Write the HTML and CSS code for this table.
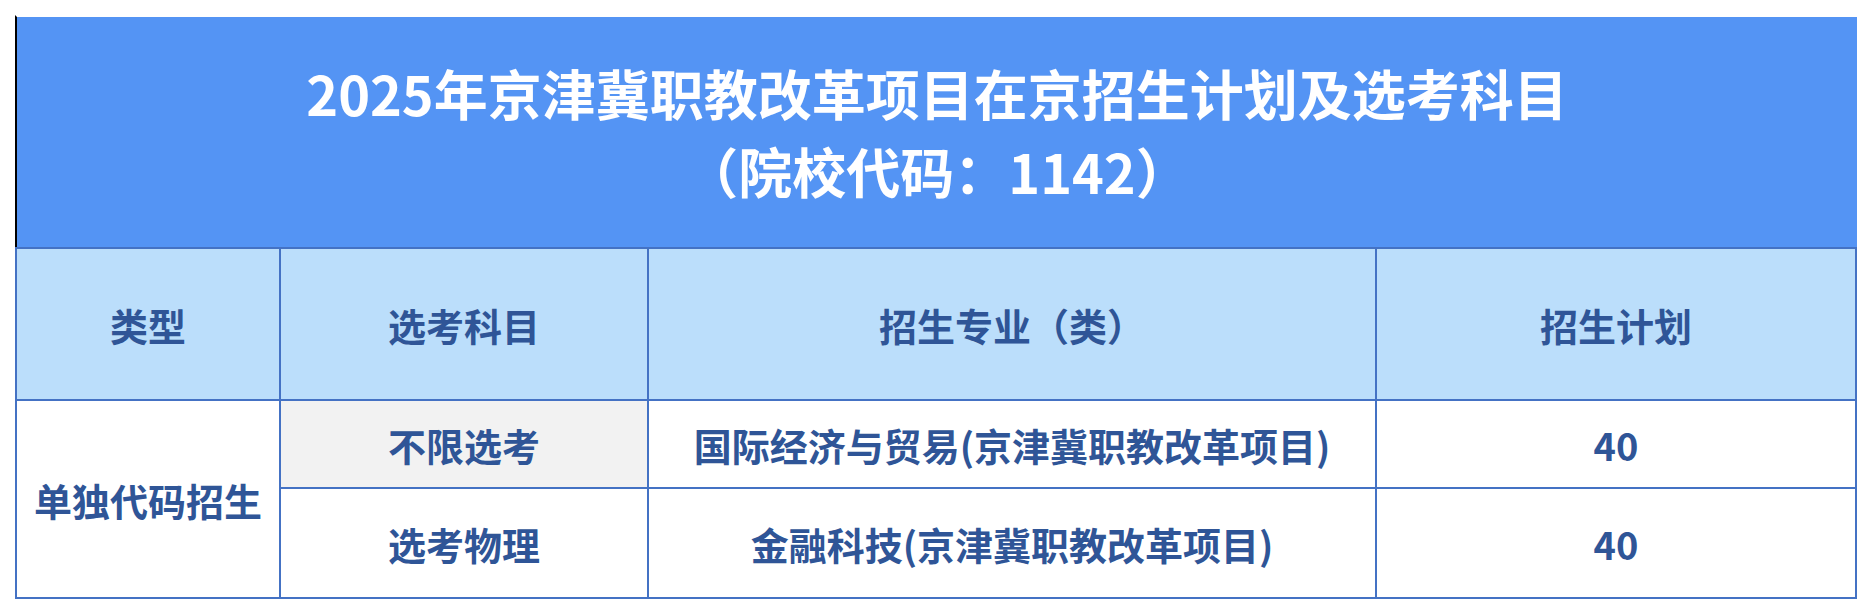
FILE: index.html
```html
<!DOCTYPE html>
<html lang="zh-CN">
<head>
<meta charset="utf-8">
<title>2025年京津冀职教改革项目在京招生计划及选考科目</title>
<link rel="stylesheet" href="styles.css">
</head>
<body>
<div class="sheet">
  <div class="banner">
    <div class="banner-line">2025年京津冀职教改革项目在京招生计划及选考科目</div>
    <div class="banner-line">（院校代码：1142）</div>
  </div>
  <div class="grid">
    <div class="cell head">类型</div>
    <div class="cell head">选考科目</div>
    <div class="cell head">招生专业（类）</div>
    <div class="cell head">招生计划</div>

    <div class="cell span2">单独代码招生</div>
    <div class="cell gray">不限选考</div>
    <div class="cell">国际经济与贸易(京津冀职教改革项目)</div>
    <div class="cell">40</div>

    <div class="cell">选考物理</div>
    <div class="cell">金融科技(京津冀职教改革项目)</div>
    <div class="cell">40</div>
  </div>
</div>
</body>
</html>
```

FILE: styles.css
```css
html, body {
  margin: 0;
  padding: 0;
  background: #ffffff;
}

body {
  font-family: "Noto Sans CJK SC", "Noto Sans", sans-serif;
  font-weight: 700;
}

.sheet {
  margin: 15px 0 0 15px;
  width: 1842px;
}

.banner {
  box-sizing: border-box;
  height: 232px;
  border-left: 2px solid #000000;
  border-top: 2px solid #ffffff;
  background: #5494f4;
  color: #ffffff;
  display: flex;
  flex-direction: column;
  justify-content: center;
  align-items: center;
  font-size: 54px;
  line-height: 78px;
}

.banner-line {
  white-space: nowrap;
}

.grid {
  display: grid;
  grid-template-columns: 262px 366px 726px 478px;
  grid-template-rows: 150px 86px 108px;
  gap: 2px;
  padding: 2px;
  background: #4472c4;
}

.cell {
  background: #ffffff;
  color: #2f5597;
  font-size: 38px;
  display: flex;
  align-items: center;
  justify-content: center;
  white-space: nowrap;
}

.head {
  background: #bbdefb;
}

.gray {
  background: #f2f2f2;
}

.span2 {
  grid-row: span 2;
}
```
